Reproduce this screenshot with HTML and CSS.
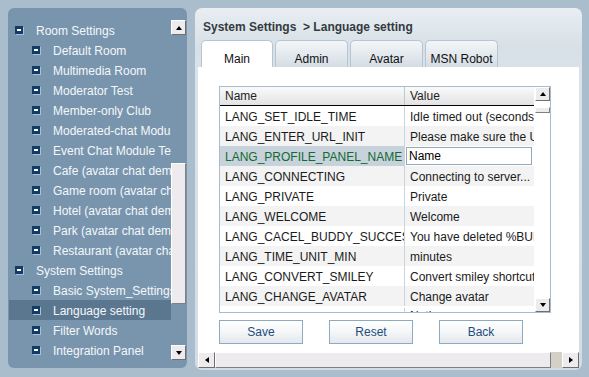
FILE: index.html
```html
<!DOCTYPE html>
<html>
<head>
<meta charset="utf-8">
<link rel="stylesheet" href="styles.css">
</head>
<body>
<div class="app">
  <aside class="left">
    <ul class="tree">
      <li class="root"><span class="ico"></span>Room Settings</li>
      <li class="child"><span class="ico"></span>Default Room</li>
      <li class="child"><span class="ico"></span>Multimedia Room</li>
      <li class="child"><span class="ico"></span>Moderator Test</li>
      <li class="child"><span class="ico"></span>Member-only Club</li>
      <li class="child"><span class="ico"></span>Moderated-chat Module Test</li>
      <li class="child"><span class="ico"></span>Event Chat Module Test</li>
      <li class="child"><span class="ico"></span>Cafe (avatar chat demo)</li>
      <li class="child"><span class="ico"></span>Game room (avatar chat demo)</li>
      <li class="child"><span class="ico"></span>Hotel (avatar chat demo)</li>
      <li class="child"><span class="ico"></span>Park (avatar chat demo)</li>
      <li class="child"><span class="ico"></span>Restaurant (avatar chat demo)</li>
      <li class="root"><span class="ico"></span>System Settings</li>
      <li class="child"><span class="ico"></span>Basic System_Settings</li>
      <li class="child sel"><span class="ico"></span>Language setting</li>
      <li class="child"><span class="ico"></span>Filter Words</li>
      <li class="child"><span class="ico"></span>Integration Panel</li>
    </ul>
    <div class="vscroll">
      <div class="sbtn"><span class="tri-up"></span></div>
      <div class="track"><div class="thumb lthumb"></div></div>
      <div class="sbtn"><span class="tri-down"></span></div>
    </div>
  </aside>
  <main class="right">
    <div class="title">System Settings&nbsp; &gt; Language setting</div>
    <div class="tabs">
      <div class="tab active">Main</div>
      <div class="tab">Admin</div>
      <div class="tab">Avatar</div>
      <div class="tab">MSN Robot</div>
    </div>
    <div class="content">
      <div class="pane">
        <div class="grid">
          <div class="gmain">
            <div class="ghead"><div class="c1">Name</div><div class="c2">Value</div></div>
            <div class="row"><div class="c1">LANG_SET_IDLE_TIME</div><div class="c2">Idle timed out (seconds)</div></div>
            <div class="row alt"><div class="c1">LANG_ENTER_URL_INIT</div><div class="c2">Please make sure the URL is valid</div></div>
            <div class="row sel"><div class="c1">LANG_PROFILE_PANEL_NAME</div><div class="c2"><div class="edit">Name</div></div></div>
            <div class="row alt"><div class="c1">LANG_CONNECTING</div><div class="c2">Connecting to server...</div></div>
            <div class="row"><div class="c1">LANG_PRIVATE</div><div class="c2">Private</div></div>
            <div class="row alt"><div class="c1">LANG_WELCOME</div><div class="c2">Welcome</div></div>
            <div class="row"><div class="c1">LANG_CACEL_BUDDY_SUCCESS</div><div class="c2">You have deleted %BUDDY%</div></div>
            <div class="row alt"><div class="c1">LANG_TIME_UNIT_MIN</div><div class="c2">minutes</div></div>
            <div class="row"><div class="c1">LANG_CONVERT_SMILEY</div><div class="c2">Convert smiley shortcuts</div></div>
            <div class="row alt"><div class="c1">LANG_CHANGE_AVATAR</div><div class="c2">Change avatar</div></div>
            <div class="row last"><div class="c1"></div><div class="c2">Notice</div></div>
          </div>
          <div class="tscroll">
            <div class="sbtn"><span class="tri-up"></span></div>
            <div class="thumb tthumb"></div>
            <div class="sbtn bottom"><span class="tri-down"></span></div>
          </div>
        </div>
        <div class="buttons">
          <div class="btn">Save</div>
          <div class="btn">Reset</div>
          <div class="btn">Back</div>
        </div>
      </div>
      <div class="hscroll">
        <div class="sbtn hb"><span class="tri-left"></span></div>
        <div class="thumb hthumb"></div>
        <div class="htrack"></div>
        <div class="sbtn hb"><span class="tri-right"></span></div>
      </div>
    </div>
  </main>
</div>
</body>
</html>
```
FILE: styles.css
```css
* { box-sizing: border-box; }
html, body { margin: 0; padding: 0; }
body {
  width: 589px;
  height: 377px;
  background: #a9bdcc;
  font-family: "Liberation Sans", Arial, sans-serif;
  font-size: 12px;
  overflow: hidden;
}
.app {
  display: flex;
  gap: 8px;
  padding: 8px 7px 0 8px;
}

/* ---- left tree panel ---- */
.left {
  width: 179px;
  height: 360px;
  background: #7895ad;
  border-radius: 6px;
  display: flex;
  padding: 12px 1px 8px 1px;
}
.tree {
  list-style: none;
  margin: 0;
  padding: 0;
  width: 162px;
  overflow: hidden;
}
.tree li {
  height: 20px;
  display: flex;
  align-items: center;
  padding-top: 1px;
  white-space: nowrap;
  overflow: hidden;
  color: #f4f7fa;
}
.tree li.root { padding-left: 6px; }
.tree li.child { padding-left: 23px; }
.tree li.sel { background: #5b7790; }
.ico {
  flex: none;
  width: 8px;
  height: 8px;
  margin-right: 13px;
  background: #123c66;
  box-shadow: 1px 1px 0 #a8c0d6;
  position: relative;
  top: -1px;
}
.ico::after {
  content: "";
  position: absolute;
  left: 2px;
  top: 3px;
  width: 4px;
  height: 2px;
  background: #ffffff;
}
.vscroll {
  width: 15px;
  display: flex;
  flex-direction: column;
}
.track { flex: 1; }

/* scrollbar parts */
.sbtn {
  width: 15px;
  height: 15px;
  background: #eeebee;
  border-top: 1px solid #ffffff;
  border-left: 1px solid #ffffff;
  border-right: 1px solid #6f6f6f;
  border-bottom: 1px solid #6f6f6f;
  display: flex;
  align-items: center;
  justify-content: center;
  flex: none;
}
.thumb {
  background: #eeebee;
  border-top: 1px solid #ffffff;
  border-left: 1px solid #ffffff;
  border-right: 1px solid #808080;
  border-bottom: 1px solid #808080;
}
.lthumb { margin-top: 128px; height: 141px; width: 15px; }
.tri-up, .tri-down, .tri-left, .tri-right { width: 0; height: 0; display: block; }
.tri-up { border-left: 3.5px solid transparent; border-right: 3.5px solid transparent; border-bottom: 4px solid #000; }
.tri-down { border-left: 3.5px solid transparent; border-right: 3.5px solid transparent; border-top: 4px solid #000; }
.tri-left { border-top: 3.5px solid transparent; border-bottom: 3.5px solid transparent; border-right: 4px solid #000; }
.tri-right { border-top: 3.5px solid transparent; border-bottom: 3.5px solid transparent; border-left: 4px solid #000; }

/* ---- right panel ---- */
.right {
  width: 387px;
  height: 362px;
  border-radius: 7px;
  background: linear-gradient(#e8eef2 0px, #d7e0e7 40px, #dbe3ea 67px, #d3dce4 100%);
  padding: 0 3px 2px 3px;
  display: flex;
  flex-direction: column;
}
.title {
  height: 32px;
  padding: 11px 5px 0;
  line-height: 16px;
  font-weight: bold;
  color: #333a40;
  white-space: pre;
}
.tabs {
  height: 27px;
  display: flex;
  padding-left: 3px;
  gap: 2px;
}
.tab {
  width: 73px;
  height: 27px;
  padding-top: 10px;
  line-height: 16px;
  text-align: center;
  color: #111;
  border: 1px solid #b6c5d1;
  border-bottom: none;
  border-radius: 5px 5px 0 0;
  background: linear-gradient(#f3f6f8, #d4dde5);
}
.tab.active { width: 72px; background: #ffffff; }
.content {
  flex: 1;
  background: #ffffff;
  display: flex;
  flex-direction: column;
}
.pane {
  flex: 1;
  padding: 19px 0 0 21px;
}

/* ---- grid ---- */
.grid {
  width: 332px;
  height: 227px;
  border: 1px solid #a9bccb;
  display: flex;
}
.gmain {
  width: 314px;
  overflow: hidden;
}
.ghead {
  height: 19px;
  display: flex;
  border-bottom: 1px solid #000;
  background: linear-gradient(#fafafa, #e3e3e3);
  line-height: 19px;
  color: #222;
}
.c1 {
  width: 185px;
  padding-left: 5px;
  border-right: 1px solid #c8d4dd;
  white-space: nowrap;
  overflow: hidden;
  flex: none;
}
.c2 {
  width: 129px;
  padding-left: 5px;
  white-space: nowrap;
  overflow: hidden;
  flex: none;
}
.ghead .c1 { border-right-color: #bcc8d2; }
.row {
  height: 20px;
  display: flex;
  padding-top: 1px;
  line-height: 20px;
  color: #1a1a1a;
  background: #ffffff;
}
.row .c1, .row .c2 { margin-top: -1px; padding-top: 1px; }
.row.alt { background: #f3f3f3; }
.row.sel .c1 { background: #c8d2da; color: #0f6a34; }
.row.sel .c2 { padding: 1px 2px 1px 1px; margin-top: -1px; }
.edit {
  height: 18px;
  border: 1px solid #93a9bc;
  background: #fff;
  line-height: 16px;
  padding-left: 2px;
  color: #000;
}
.row.last { line-height: 14px; padding-top: 3px; }
.tscroll {
  width: 16px;
  display: flex;
  flex-direction: column;
  padding-left: 1px;
}
.tscroll .sbtn { width: 15px; height: 14px; }
.tthumb { width: 15px; height: 6px; margin-top: 6px; }
.tscroll .bottom { margin-top: auto; }

/* ---- buttons ---- */
.buttons {
  display: flex;
  gap: 26px;
  margin-top: 7px;
}
.btn {
  width: 84px;
  height: 24px;
  border: 1px solid #8eaac1;
  background: linear-gradient(#ffffff, #f4f6f8 50%, #e2e8ed);
  color: #1d4d7b;
  text-align: center;
  line-height: 23px;
}

/* ---- horizontal scrollbar ---- */
.hscroll {
  height: 16px;
  display: flex;
  background: #d4d0c8;
}
.hscroll .hb { width: 17px; height: 16px; }
.hthumb { width: 336px; height: 16px; }
.htrack { flex: 1; }
```
